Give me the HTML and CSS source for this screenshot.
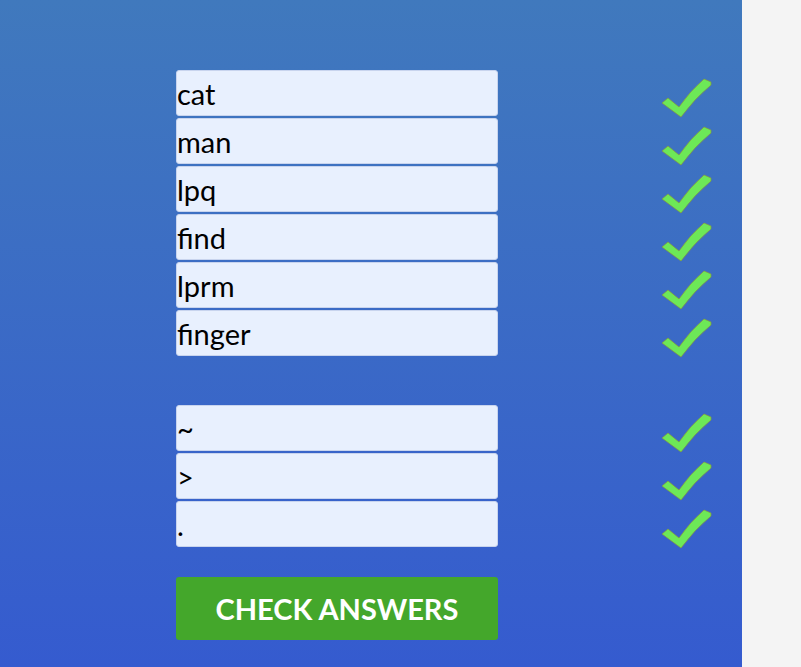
FILE: index.html
```html
<!DOCTYPE html>
<html>
<head>
<meta charset="utf-8">
<link rel="stylesheet" href="styles.css">
</head>
<body>
<div class="page">
  <main class="panel">
    <form class="quiz">
      <div class="group">
        <div class="row"><input class="answer" type="text" value="cat"><svg class="check" viewBox="0 0 50 40"><path d="M0,25 L6,20 L17,29 Q28,13 42,1 L49,4 L49,7 Q33,20 19,39 Z"/></svg></div>
        <div class="row"><input class="answer" type="text" value="man"><svg class="check" viewBox="0 0 50 40"><path d="M0,25 L6,20 L17,29 Q28,13 42,1 L49,4 L49,7 Q33,20 19,39 Z"/></svg></div>
        <div class="row"><input class="answer" type="text" value="lpq"><svg class="check" viewBox="0 0 50 40"><path d="M0,25 L6,20 L17,29 Q28,13 42,1 L49,4 L49,7 Q33,20 19,39 Z"/></svg></div>
        <div class="row"><input class="answer" type="text" value="find"><svg class="check" viewBox="0 0 50 40"><path d="M0,25 L6,20 L17,29 Q28,13 42,1 L49,4 L49,7 Q33,20 19,39 Z"/></svg></div>
        <div class="row"><input class="answer" type="text" value="lprm"><svg class="check" viewBox="0 0 50 40"><path d="M0,25 L6,20 L17,29 Q28,13 42,1 L49,4 L49,7 Q33,20 19,39 Z"/></svg></div>
        <div class="row"><input class="answer" type="text" value="finger"><svg class="check" viewBox="0 0 50 40"><path d="M0,25 L6,20 L17,29 Q28,13 42,1 L49,4 L49,7 Q33,20 19,39 Z"/></svg></div>
      </div>
      <div class="group group-second">
        <div class="row"><input class="answer" type="text" value="~"><svg class="check" viewBox="0 0 50 40"><path d="M0,25 L6,20 L17,29 Q28,13 42,1 L49,4 L49,7 Q33,20 19,39 Z"/></svg></div>
        <div class="row"><input class="answer" type="text" value="&gt;"><svg class="check" viewBox="0 0 50 40"><path d="M0,25 L6,20 L17,29 Q28,13 42,1 L49,4 L49,7 Q33,20 19,39 Z"/></svg></div>
        <div class="row"><input class="answer" type="text" value="."><svg class="check" viewBox="0 0 50 40"><path d="M0,25 L6,20 L17,29 Q28,13 42,1 L49,4 L49,7 Q33,20 19,39 Z"/></svg></div>
      </div>
      <button class="submit" type="button">CHECK ANSWERS</button>
    </form>
  </main>
  <aside class="side"></aside>
</div>
</body>
</html>
```
FILE: styles.css
```css
html, body {
  margin: 0;
  padding: 0;
  height: 100%;
}
body {
  font-family: Lato, "Open Sans", sans-serif;
  background: #f4f4f4;
}
.page {
  display: flex;
  height: 667px;
}
.panel {
  width: 742px;
  height: 667px;
  background: linear-gradient(to bottom, #4079bd 0%, #355bcf 100%);
  box-sizing: border-box;
  padding: 70px 0 0 176px;
}
.side {
  flex: 1;
  background: #f4f4f4;
}
.quiz {
  display: flex;
  flex-direction: column;
}
.group {
  display: flex;
  flex-direction: column;
  gap: 2px;
}
.group-second {
  margin-top: 49px;
}
.row {
  display: flex;
  align-items: flex-start;
  height: 46px;
}
.answer {
  width: 322px;
  height: 46px;
  box-sizing: border-box;
  margin: 0;
  padding: 0;
  border: 1px solid #c8d4ee;
  border-radius: 3px;
  background: #e8f0fe;
  font-family: Lato, sans-serif;
  font-size: 29px;
  color: #000;
  outline: none;
}
.check {
  flex: none;
  width: 50px;
  height: 40px;
  margin-left: 164px;
  margin-top: 8px;
  fill: #6de857;
  stroke: #8a9a3a;
  stroke-width: 0.7;
  stroke-linejoin: round;
}
.submit {
  margin-top: 30px;
  width: 322px;
  height: 63px;
  border: none;
  border-radius: 3px;
  background: #44a72b;
  color: #fff;
  font-family: Lato, sans-serif;
  font-weight: 700;
  font-size: 29px;
  padding: 0;
  cursor: pointer;
}
```
